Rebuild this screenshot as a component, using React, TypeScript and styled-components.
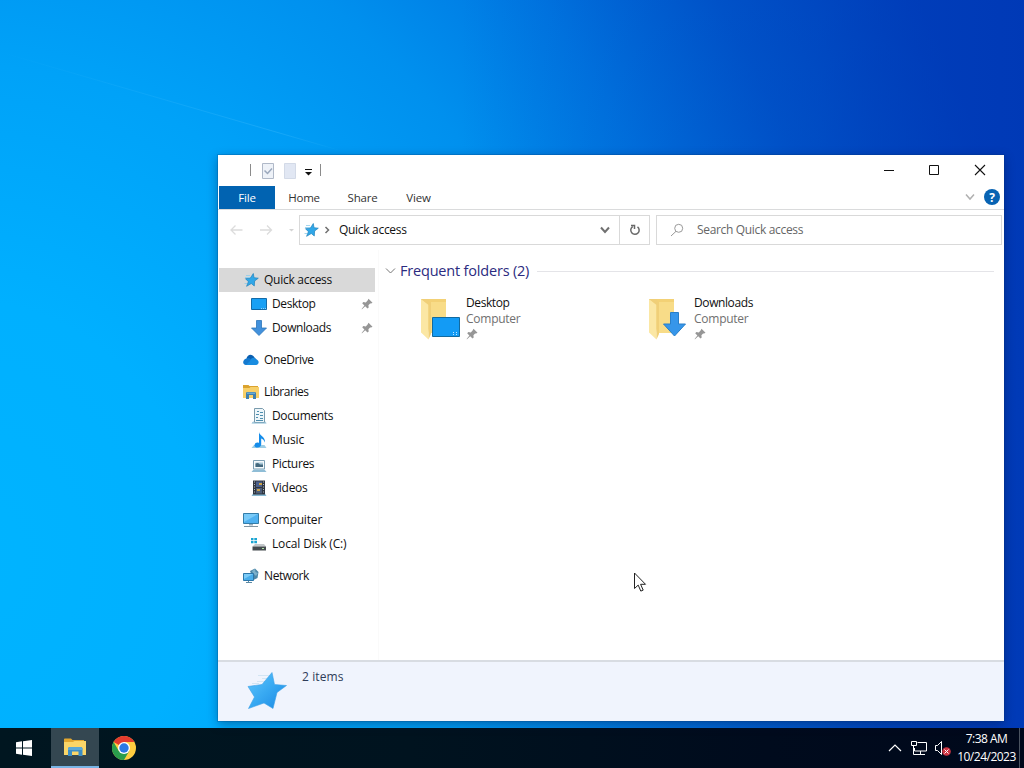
import React from 'react'
import styled, { createGlobalStyle } from 'styled-components'

const GlobalStyle = createGlobalStyle`
  * {
    box-sizing: border-box;
  }
  body {
    margin: 0;
    overflow: hidden;
    font-family: 'Open Sans', 'Noto Sans', sans-serif;
    font-size: 12px;
    color: #111;
  }
  svg {
    display: block;
    flex: none;
  }
`

const Screen = styled.div`
  position: relative;
  width: 1024px;
  height: 768px;
  display: flex;
  flex-direction: column;
  overflow: hidden;
`

const Wallpaper = styled.div`
  position: relative;
  flex: 1;
  background: radial-gradient(ellipse 1090px 1180px at -40px 560px, #00b4ff 0%, #00b0ff 22%, #00a2f8 42%, #0090ee 58%, #0078e2 71%, #005ccf 84%, #0046c0 100%);
`

const Beam = styled.svg`
  position: absolute;
  inset: 0;
`

const Explorer = styled.div`
  position: absolute;
  left: 218px;
  top: 155px;
  width: 786px;
  height: 566px;
  display: flex;
  flex-direction: column;
  background: #fff;
  box-shadow: 0 0 0 1px rgba(0, 50, 110, 0.2), 0 3px 10px rgba(0, 20, 60, 0.4);
`

const TitleBar = styled.div`
  height: 31px;
  display: flex;
  align-items: center;
  justify-content: space-between;
`

const QuickTools = styled.div`
  display: flex;
  align-items: center;
  padding: 1px 0 0 32px;
`

const WindowButtons = styled.div`
  display: flex;
  padding: 0 1px 1px 0;
`

const WindowButton = styled.div`
  width: 45.5px;
  display: flex;
  justify-content: center;
`

const TabBar = styled.div`
  height: 24px;
  display: flex;
  padding-left: 1px;
  border-bottom: 1px solid #dadbdc;
`

const Tab = styled.div<{ $active?: boolean; $width: number }>`
  width: ${(p) => p.$width}px;
  height: 23px;
  line-height: 24px;
  text-align: center;
  font-size: 11.5px;
  letter-spacing: -0.2px;
  color: ${(p) => (p.$active ? '#fff' : '#333')};
  background: ${(p) => (p.$active ? '#0163b1' : 'transparent')};
`

const TabActions = styled.div`
  margin-left: auto;
  display: flex;
  align-items: center;
  gap: 9px;
  padding: 0 4px 1px 0;
`

const AddressRow = styled.div`
  height: 40px;
  display: flex;
  padding: 5px 2px 5px 11px;
`

const NavButtons = styled.div`
  width: 70px;
  display: flex;
  align-items: center;
`

const AddressBox = styled.div`
  width: 351px;
  height: 30px;
  display: flex;
  align-items: center;
  border: 1px solid #d9d9d9;
`

const AddressPath = styled.div`
  flex: 1;
  height: 28px;
  display: flex;
  align-items: center;
  padding: 0 9px 0 3px;
  border-right: 1px solid #d9d9d9;
`

const AddressText = styled.span`
  flex: 1;
  padding: 0 0 1px 8px;
  letter-spacing: -0.3px;
`

const Reload = styled.div`
  width: 29px;
  display: flex;
  justify-content: center;
`

const SearchBox = styled.div`
  flex: 1;
  height: 30px;
  margin-left: 6px;
  display: flex;
  align-items: center;
  gap: 13px;
  padding: 0 0 1px 13px;
  border: 1px solid #d9d9d9;
  color: #666;
  letter-spacing: -0.33px;
`

const Body = styled.div`
  flex: 1;
  display: flex;
`

const Sidebar = styled.div`
  width: 161px;
  padding: 18px 3px 0 1px;
  border-right: 1px solid #fafafa;
`

const NavItem = styled.div<{ $level: number; $gap?: boolean; $active?: boolean }>`
  height: 24px;
  margin-top: ${(p) => (p.$gap ? 8 : 0)}px;
  display: flex;
  align-items: center;
  gap: 5px;
  padding: 0 2px 0 ${(p) => 24 + p.$level * 8}px;
  background: ${(p) => (p.$active ? '#d9d9d9' : 'transparent')};
`

const NavLabel = styled.span<{ $spacing?: number }>`
  flex: 1;
  padding-bottom: 1px;
  white-space: nowrap;
  letter-spacing: ${(p) => p.$spacing ?? -0.4}px;
`

const Content = styled.div`
  flex: 1;
  padding: 10px 10px 0 6px;
`

const GroupHeader = styled.div`
  height: 22px;
  display: flex;
  align-items: center;
  color: #2b2b80;
  font-size: 14.5px;
`

const GroupTitle = styled.span`
  margin: 0 8px 0 4px;
  padding-bottom: 2px;
  letter-spacing: -0.19px;
`

const Rule = styled.div`
  flex: 1;
  height: 1px;
  background: #e4e4e8;
`

const Folders = styled.div`
  display: flex;
  padding: 11px 0 0 35px;
`

const FolderTile = styled.div`
  width: 228px;
  display: flex;
  gap: 5px;
`

const FolderText = styled.div`
  padding-top: 2px;
  line-height: 16px;
  letter-spacing: -0.4px;
`

const Location = styled.div`
  color: #707070;
  letter-spacing: -0.25px;
  margin-bottom: 1px;
`

const Details = styled.div`
  height: 61px;
  display: flex;
  padding: 9px 0 0 28px;
  background: #f0f4fd;
  border-top: 2px solid #d8dce2;
`

const ItemCount = styled.span`
  margin: -3px 0 0 15px;
  color: #2e3c59;
  letter-spacing: 0.1px;
`

const Taskbar = styled.div`
  height: 40px;
  display: flex;
  background: linear-gradient(90deg, #001620 0%, #00131f 40%, #000b1d 75%, #00081b 100%);
`

const TaskButton = styled.div<{ $width: number; $active?: boolean }>`
  width: ${(p) => p.$width}px;
  height: 40px;
  display: flex;
  align-items: center;
  justify-content: center;
  background: ${(p) => (p.$active ? '#344751' : 'transparent')};
  border-bottom: ${(p) => (p.$active ? '2px solid #79b5e6' : 'none')};
`

const Tray = styled.div`
  margin-left: auto;
  display: flex;
  align-items: center;
  color: #fff;
`

const Clock = styled.div`
  width: 67px;
  padding-left: 2px;
  text-align: center;
  line-height: 18px;
  letter-spacing: -0.5px;
  white-space: nowrap;
`

const ShowDesktop = styled.div`
  width: 5px;
  height: 40px;
  border-left: 1px solid #4a5360;
`

const Cursor = styled.svg`
  position: absolute;
  left: 633px;
  top: 572px;
`

const Star = () => (
  <svg width="16" height="16">
    <path
      d="M10.300 1.500 11 5.700 15.300 6.200 11.600 9 11.300 14 8.300 11.500 3.600 14.300 5.400 9.700 2.500 6.700 7.400 6z"
      fill="#30a7e8"
      stroke="#1f83bd"
      strokeWidth=".7"
    />
    <path d="M3 3.500h4M2 5.500h5M1.500 11.500h2.500" stroke="#8ecbeb" strokeWidth=".8" />
  </svg>
)

const BigStar = () => (
  <svg width="41" height="41">
    <defs>
      <linearGradient id="star" x1="0" y1="0" x2="1" y2="1">
        <stop offset="0" stopColor="#62c6fb" />
        <stop offset=".5" stopColor="#38a9f2" />
        <stop offset="1" stopColor="#1a87e2" />
      </linearGradient>
    </defs>
    <path d="M12 4.500h11M16 7.500h6M11 10.500h9M6 12.500h7" stroke="#d3e5f3" />
    <path
      d="M26 1.500 28.500 13.500 40.500 14.500 31 21.500 27 37.500 18 32 2.500 37.500 8.500 26 2 15.500 16 13.500z"
      fill="url(#star)"
      stroke="#3a9fe8"
      strokeWidth=".6"
      strokeLinejoin="round"
    />
  </svg>
)

const DesktopIcon = () => (
  <svg width="16" height="16">
    <path d="M.5 2.500h15v11H.5z" fill="#18a0f5" stroke="#146ba8" />
    <path d="M1 13.500h9" stroke="#0c65a5" />
    <path d="M10 12.500h5" stroke="#8fd2fb" strokeDasharray="1 1" />
  </svg>
)

const DownloadIcon = () => (
  <svg width="16" height="16">
    <path d="M5.500.5h5v7.500h5L8 15.500.5 8h5z" fill="#4291dc" stroke="#2c76ba" strokeWidth=".8" />
  </svg>
)

const CloudIcon = () => (
  <svg width="16" height="16">
    <path d="M3.500 7C3.800 2.500 9 1 11.500 5.500L14 8H4z" fill="#0a5fb0" />
    <path d="M3 13C-1 13-.7 7.500 3.500 6.500c1.500-1 3-.5 4 .5L12 13z" fill="#1479cf" />
    <path d="M7 9c1-3.500 4.500-4.500 6-1.500 3.500.3 3.500 5.300 0 5.500H3z" fill="#198ce0" />
  </svg>
)

const LibraryIcon = () => (
  <svg width="16" height="16">
    <path d="M0 1h5.500l1 1H15v4H0z" fill="#dba32f" />
    <path d="M0 4h6.500l1-1H16v11H0z" fill="#f7d06a" />
    <path d="M3 15V9.500c0-1 .5-1.500 1.500-1.500h7c1 0 1.500.5 1.500 1.500V15h-3v-4H6v4z" fill="#3f80b0" />
    <path d="M4 8.500h8v1.500H4z" fill="#68abd3" />
  </svg>
)

const ExplorerIcon = () => (
  <svg width="22" height="20">
    <path d="M0 2.500C0 1.800.500 1.500 1 1.500h6L8.500 3H20v3H0z" fill="#e3a72f" />
    <path d="M0 5h9l1.500-1H22v14H0z" fill="#fbd668" />
    <path d="M4 19v-7c0-1.200.8-2 2-2h10.500c1.200 0 2 .8 2 2v7h-4v-4.500H8V19z" fill="#3c8dc5" />
    <path d="M4 12c0-1.200.8-2 2-2h10.500c1.200 0 2 .8 2 2v1H4z" fill="#5aa9d8" />
  </svg>
)

const DocumentIcon = () => (
  <svg width="16" height="16">
    <path d="M3.500.5h8l2 2v12h-10z" fill="#eef6fa" stroke="#799bad" />
    <path d="M6 3.500h2M9 4.500h3M5 6.500h3M9 7.500h3M5 9.500h2M9 10.500h3M5 12.500h7" stroke="#4e8eae" />
    <path d="M.5 15.500 2.500 13v1.500h12V13l1 2.500z" fill="#86b8d2" />
  </svg>
)

const MusicIcon = () => (
  <svg width="16" height="16">
    <path d="M.5 16 3 13h10.500l2 3z" fill="#9dcde5" />
    <path d="M8 0c.3 3.500 6.500 4.500 6 10.500-1-2.500-2.300-3.500-3.800-4v6c0 4-7.500 3.800-6.700.5.400-2.300 2.800-3 4.500-2z" fill="#168dea" />
  </svg>
)

const PictureIcon = () => (
  <svg width="16" height="16">
    <path d="M2.500 4.500h11v8.500h-11z" fill="#f6fafc" stroke="#7d9fb3" />
    <path d="M4.500 6.500h7.500V11H4.500z" fill="#a8c7d6" />
    <path d="M4.500 7.500 7 7l2 1.500h3V11H4.500z" fill="#44697e" />
    <path d="M.5 16 2.500 13.500h11l2 2.500z" fill="#8fbdd6" />
  </svg>
)

const VideoIcon = () => (
  <svg width="16" height="16">
    <path d="M.5 16 2 13.500h12l1.500 2.500z" fill="#86b8d2" />
    <path d="M2 .5h12v14H2z" fill="#303640" />
    <path d="M5 1.500h6V7H5z" fill="#4a5f8c" />
    <path d="M5 8h6v5.500H5z" fill="#4d5d78" />
    <path d="M8 3h3v2H8zM6 9h3v2H6z" fill="#c9a249" />
    <path d="M3.500 1.500v12M12.500 1.500v12" stroke="#aeb8c0" strokeDasharray="1 1.500" />
  </svg>
)

const ComputerIcon = () => (
  <svg width="16" height="16">
    <path d="M.5 1.500h15v10H.5z" fill="#50b1f0" stroke="#347da9" />
    <path d="M1 2h14L1 10z" fill="#79caf8" />
    <path d="M6 12h4v1.500H6z" fill="#98adba" />
    <path d="M1 14.500h14" stroke="#8194a0" />
  </svg>
)

const DiskIcon = () => (
  <svg width="16" height="16">
    <path d="M0 2h2.500v2.200H0zM3.300 2h2.700v2.200H3.300zM0 5h2.500v2.200H0zM3.300 5h2.700v2.200H3.300z" fill="#1ba5d2" />
    <path d="M4 8h9l2 2.500H1.500z" fill="#c3c7ca" />
    <path d="M1.500 10.500H15v4H1.500z" fill="#454b4f" />
    <path d="M11 12.500h2" stroke="#b4e9a9" />
  </svg>
)

const NetworkIcon = () => (
  <svg width="16" height="16">
    <path d="M7 3 12 .5 15.500 4l-1 6-4 2z" fill="#4d86a6" />
    <path d="m9 3 3-2 .5 3 2.500 1-2 3-3-3z" fill="#7cb0cb" />
    <path d="M.5 5.500h10v7H.5z" fill="#49adea" stroke="#2d77aa" />
    <path d="m1 6 9 0-9 5z" fill="#7ccbf7" />
    <path d="M5.500 13v1.500M3 14.500h6" stroke="#5d8aa4" />
  </svg>
)

const Pin = () => (
  <svg width="12" height="12">
    <path d="m7.500.8 4 4-1.400.6-1 .1-1.700 1.700.3 2.300-1.200 1L4.200 8.200.8 11.500l0-.8L3.400 7.400 1.200 5.300l1.200-1.200 2.400.3L6.600 2.500z" fill="#969696" />
  </svg>
)

const Folder = ({ kind }: { kind: 'desktop' | 'downloads' }) => (
  <svg width="41" height="48">
    <path d="M1 6h25v34H9z" fill="#f3d175" />
    <path d="M11 9h15v31H11z" fill="#f8dc88" />
    <path d="M1 6 8.500 11v35.500L1 39.500z" fill="#fbe7a4" />
    <path d="M1 6h7l3 4v31l-2.500 5.500V12z" fill="#f0cf78" />
    {kind === 'desktop' ? (
      <>
        <path d="M12.500 24.500h27v19h-27z" fill="#139bf5" stroke="#126a9f" />
        <path d="M33 41.500h6M33 39.500h6" stroke="#bfe7ff" strokeDasharray="1 2" />
      </>
    ) : (
      <path d="M22.500 19.500h8V31h7L26.500 43 15.500 31h7z" fill="#3696ea" stroke="#287fc9" />
    )}
  </svg>
)

const Chevron = ({ width = 10, color = '#777', stroke = 1.5 }) => (
  <svg width={width} height="8">
    <path
      d={`M1 1.500 ${width / 2} 6 ${width - 1} 1.500`}
      fill="none"
      stroke={color}
      strokeWidth={stroke}
    />
  </svg>
)

const navItems = [
  { label: 'Quick access', icon: <Star />, level: 0, active: true, spacing: -0.27 },
  { label: 'Desktop', icon: <DesktopIcon />, level: 1, pinned: true },
  { label: 'Downloads', icon: <DownloadIcon />, level: 1, pinned: true },
  { label: 'OneDrive', icon: <CloudIcon />, level: 0, gap: true },
  { label: 'Libraries', icon: <LibraryIcon />, level: 0, gap: true, spacing: -0.45 },
  { label: 'Documents', icon: <DocumentIcon />, level: 1, spacing: -0.35 },
  { label: 'Music', icon: <MusicIcon />, level: 1, spacing: -0.1 },
  { label: 'Pictures', icon: <PictureIcon />, level: 1, spacing: -0.35 },
  { label: 'Videos', icon: <VideoIcon />, level: 1, spacing: -0.3 },
  { label: 'Compuiter', icon: <ComputerIcon />, level: 0, gap: true, spacing: -0.15 },
  { label: 'Local Disk (C:)', icon: <DiskIcon />, level: 1, spacing: -0.15 },
  { label: 'Network', icon: <NetworkIcon />, level: 0, gap: true, spacing: -0.4 },
]

const App = () => {
  return (
    <Screen>
      <GlobalStyle />
      <Wallpaper>
        <Beam width="1024" height="728">
          <defs>
            <linearGradient id="night" x1="0" x2="1">
              <stop offset=".45" stopColor="#0036b4" stopOpacity="0" />
              <stop offset=".6" stopColor="#0036b4" stopOpacity=".16" />
              <stop offset=".8" stopColor="#0036b4" stopOpacity=".36" />
              <stop offset="1" stopColor="#0036b4" stopOpacity=".8" />
            </linearGradient>
            <linearGradient id="ray" x1="0" x2="1">
              <stop offset="0" stopColor="#5bc8ff" stopOpacity="0" />
              <stop offset=".8" stopColor="#5bc8ff" stopOpacity=".25" />
              <stop offset="1" stopColor="#5bc8ff" stopOpacity="0" />
            </linearGradient>
          </defs>
          <path d="M0 0h1024v728H0z" fill="url(#night)" />
          <path d="M0 52 345 152" stroke="url(#ray)" />
        </Beam>
      </Wallpaper>

      <Explorer>
        <TitleBar>
          <QuickTools>
            <svg width="72" height="18">
              <path d="M.5 2v12M70.500 2v12" stroke="#8b8b8b" />
              <path d="M12.500 1.500h11v15h-11z" fill="#eef2f8" stroke="#b0b9c8" />
              <path d="m14.500 8.500 3 3L22 6.500" fill="none" stroke="#9ba8bc" strokeWidth="1.500" />
              <path d="M34.500 1.500h11v15h-11z" fill="#e1e7f3" stroke="#d3dae7" />
              <path d="M55 7.500h7" stroke="#111" />
              <path d="M55 10h7l-3.500 3.500z" fill="#111" />
            </svg>
          </QuickTools>
          <WindowButtons>
            <WindowButton>
              <svg width="12" height="12">
                <path d="M1 6.500h10" stroke="#111" />
              </svg>
            </WindowButton>
            <WindowButton>
              <svg width="13" height="12">
                <path d="M1.500 1.500h9v9h-9z" fill="none" stroke="#111" />
              </svg>
            </WindowButton>
            <WindowButton>
              <svg width="12" height="12">
                <path d="m1 1 10 10M11 1 1 11" stroke="#111" strokeWidth="1.100" />
              </svg>
            </WindowButton>
          </WindowButtons>
        </TitleBar>

        <TabBar>
          <Tab $active $width={56}>File</Tab>
          <Tab $width={58}>Home</Tab>
          <Tab $width={59}>Share</Tab>
          <Tab $width={53}>View</Tab>
          <TabActions>
            <Chevron color="#b0b0b0" />
            <svg width="16" height="16">
              <circle cx="8" cy="8" r="8" fill="#0863b3" />
              <text x="8" y="12.500" fill="#fff" fontSize="12" fontWeight="700" textAnchor="middle">?</text>
            </svg>
          </TabActions>
        </TabBar>

        <AddressRow>
          <NavButtons>
            <svg width="68" height="16" fill="none" stroke="#dcdcdc" strokeWidth="1.300">
              <path d="M13.500 8H2M6.500 3.500 2 8l4.500 4.500M31 8h11.500M38 3.500 42.500 8 38 12.500" />
              <path d="M60 7h5l-2.500 2.500z" fill="#d3d3d3" stroke="none" />
            </svg>
          </NavButtons>
          <AddressBox>
            <AddressPath>
              <Star />
              <svg width="12" height="10">
                <path d="m6.500 2 3 3-3 3" fill="none" stroke="#707070" strokeWidth="1.500" />
              </svg>
              <AddressText>Quick access</AddressText>
              <Chevron color="#707070" stroke={2} />
            </AddressPath>
            <Reload>
              <svg width="14" height="14" fill="none" stroke="#696969" strokeWidth="1.500">
                <path d="M9.500 3.800a4.200 4.200 0 1 1-4.800-.2M3 2.500h3.500V6" />
              </svg>
            </Reload>
          </AddressBox>
          <SearchBox>
            <svg width="14" height="14" fill="none" stroke="#999">
              <circle cx="8.700" cy="5.300" r="4" />
              <path d="m6 8.300-5 4.700" />
            </svg>
            Search Quick access
          </SearchBox>
        </AddressRow>

        <Body>
          <Sidebar>
            {navItems.map((item) => (
              <NavItem key={item.label} $level={item.level} $gap={item.gap} $active={item.active}>
                {item.icon}
                <NavLabel $spacing={item.spacing}>{item.label}</NavLabel>
                {item.pinned && <Pin />}
              </NavItem>
            ))}
          </Sidebar>
          <Content>
            <GroupHeader>
              <Chevron width={11} color="#777" stroke={1} />
              <GroupTitle>Frequent folders (2)</GroupTitle>
              <Rule />
            </GroupHeader>
            <Folders>
              <FolderTile>
                <Folder kind="desktop" />
                <FolderText>
                  <div>Desktop</div>
                  <Location>Computer</Location>
                  <Pin />
                </FolderText>
              </FolderTile>
              <FolderTile>
                <Folder kind="downloads" />
                <FolderText>
                  <div>Downloads</div>
                  <Location>Computer</Location>
                  <Pin />
                </FolderText>
              </FolderTile>
            </Folders>
          </Content>
        </Body>

        <Details>
          <BigStar />
          <ItemCount>2 items</ItemCount>
        </Details>
      </Explorer>

      <Taskbar>
        <TaskButton $width={51}>
          <svg width="22" height="18" fill="#fff">
            <path d="M1 3.300 7 2.300v6.200H1zM8 2.200 17 1v7.500H8zM1 9.500h6v6.200l-6-1zM8 9.500h9V17l-9-1.200z" />
          </svg>
        </TaskButton>
        <TaskButton $width={48} $active>
          <ExplorerIcon />
        </TaskButton>
        <TaskButton $width={50}>
          <svg width="24" height="24">
            <circle cx="12" cy="12" r="12" fill="#ffcd40" />
            <path d="M12 12 1.600 6A12 12 0 0 1 22.400 6H12z" fill="#e33b2e" />
            <path d="M1.600 6A12 12 0 0 0 12 24l5.200-9H6.800z" fill="#2a9d4c" />
            <circle cx="12" cy="12" r="6" fill="#fff" />
            <circle cx="12" cy="12" r="4.700" fill="#2b79e3" />
          </svg>
        </TaskButton>
        <Tray>
          <svg width="64" height="20" fill="none" stroke="#fff">
            <path d="m1 13 6-6 6 6" strokeWidth="1.200" />
            <path d="M29.500 4.500h9v8.500H26.500v-3M32.500 13v3M28 16.500h9M23.500 3.500h5v4h-5zM25.500 7.500v9h3" />
            <path d="M47.500 7.500h2l4-4v13l-4-4h-2z" />
            <circle cx="58.500" cy="13.500" r="4.300" fill="#ce3442" stroke="none" />
            <path d="m56.500 11.500 4 4M60.500 11.500l-4 4" />
          </svg>
          <Clock>
            <div>7:38 AM</div>
            <div>10/24/2023</div>
          </Clock>
          <ShowDesktop />
        </Tray>
      </Taskbar>

      <Cursor width="14" height="21">
        <path d="M1.500 1v15.500l3.700-3.400 2.600 6 2.400-1-2.600-5.800h4.900z" fill="#fff" stroke="#222" />
      </Cursor>
    </Screen>
  )
}

export default App
